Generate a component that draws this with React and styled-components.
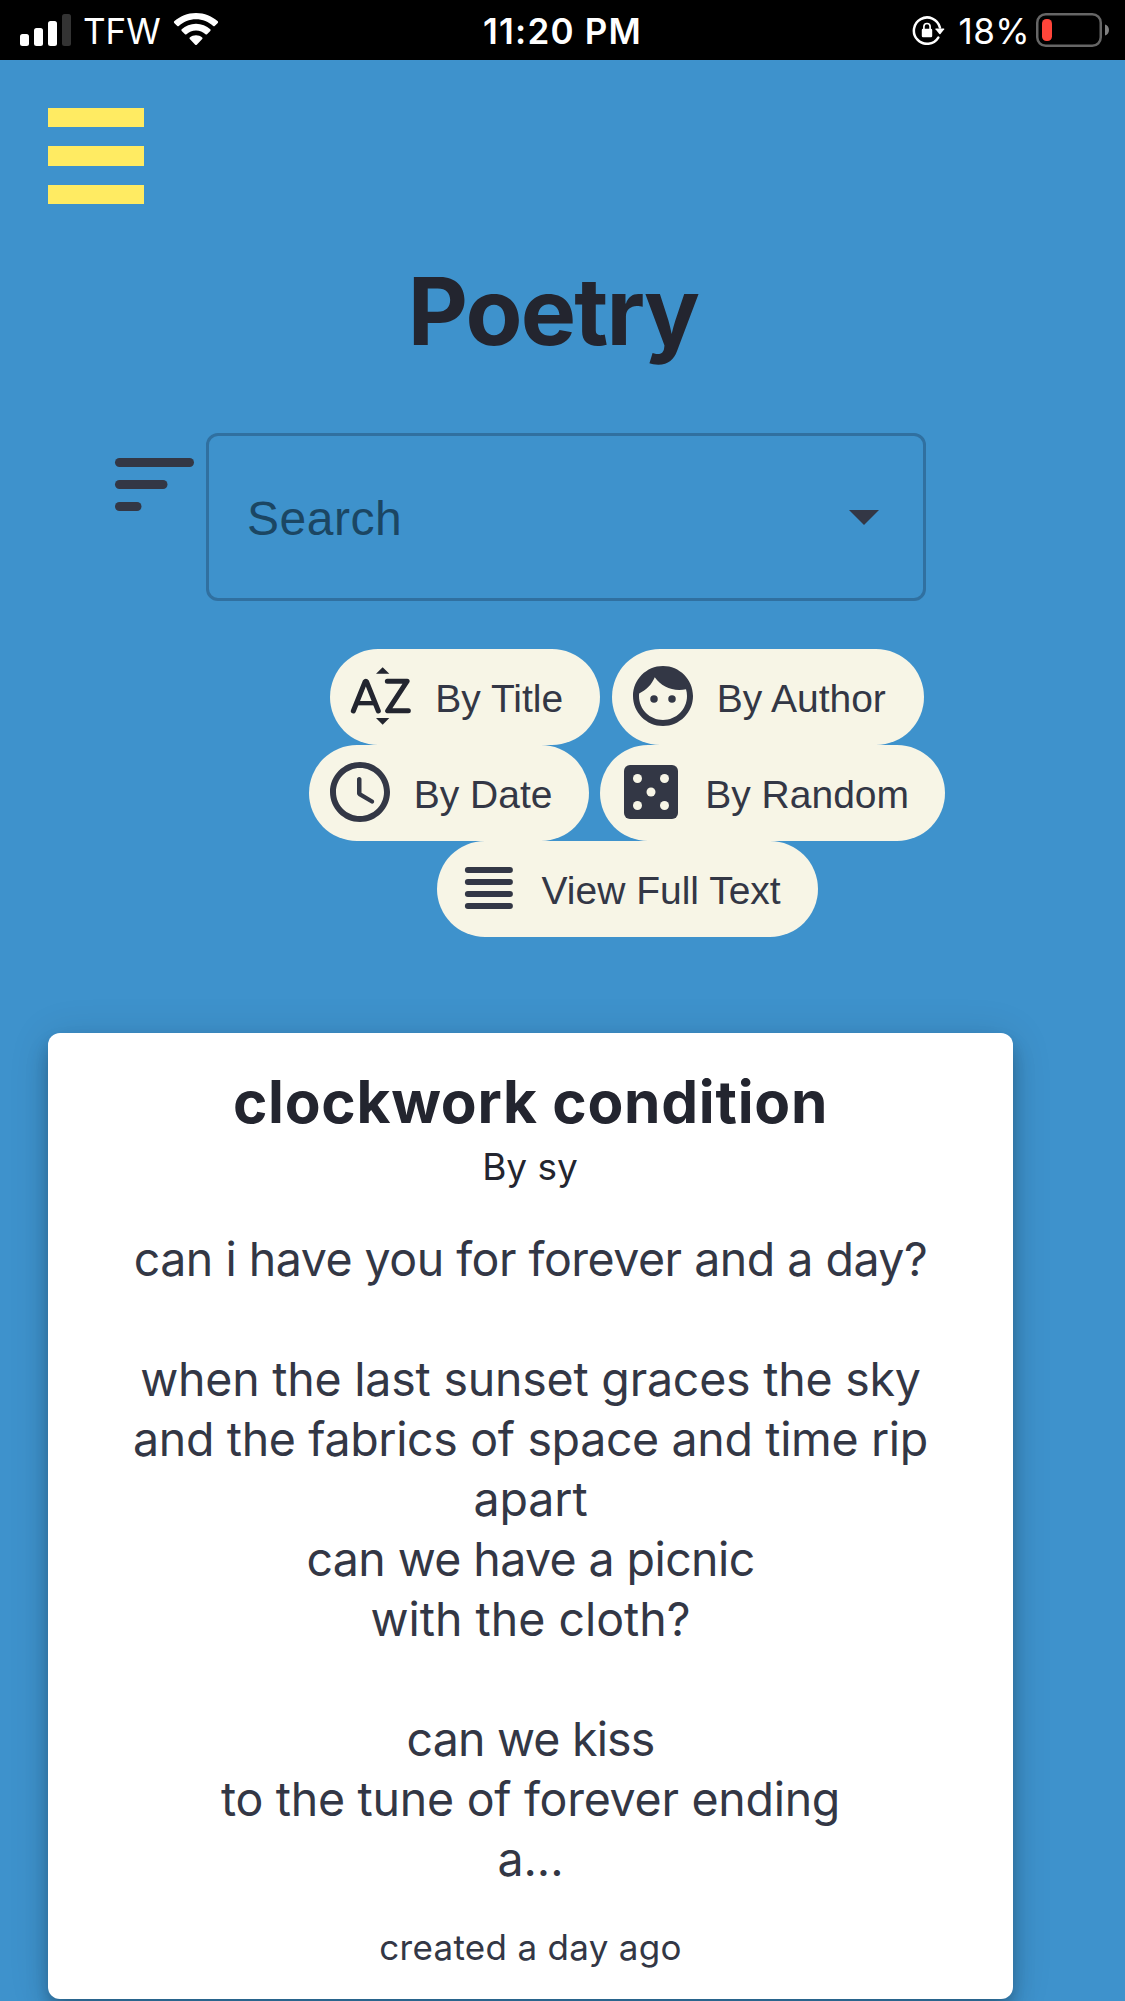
import React from "react";
import styled, { createGlobalStyle } from "styled-components";

const GlobalStyle = createGlobalStyle`
  * { box-sizing: border-box; }
  body { margin: 0; background: #3e92cc; }
`;

const sans = `Inter, "Open Sans", sans-serif`;
const helvetica = `"Liberation Sans", Arial, sans-serif`;

const Page = styled.div`
  height: 2001px;
  overflow: hidden;
  background: #3e92cc;
  color: #333745;
  font-family: ${sans};
`;

const StatusBar = styled.header`
  display: grid;
  grid-template-columns: 1fr auto 1fr;
  align-items: center;
  height: 60px;
  padding: 0 16px;
  background: #000;
  color: #fff;
`;

const StatusGroup = styled.div`
  display: flex;
  align-items: center;
  justify-content: ${(p) => (p.$end ? "flex-end" : "flex-start")};
  padding-left: ${(p) => (p.$end ? 0 : 4)}px;
`;

const StatusText = styled.span`
  padding-top: 2px;
  font-size: 35px;
  line-height: 58px;
  white-space: nowrap;
  font-weight: ${(p) => p.$weight || 400};
  letter-spacing: ${(p) => p.$spacing || 0}px;
  margin: 0 ${(p) => p.$right || 0}px 0 ${(p) => p.$left || 0}px;
`;

const Glyph = styled.svg`
  display: block;
  flex: none;
`;

const MenuButton = styled.button`
  display: flex;
  flex-direction: column;
  justify-content: space-between;
  width: 96px;
  height: 96px;
  margin: 48px 0 0 48px;
  padding: 0;
  border: 0;
  background: none;
`;

const MenuBar = styled.span`
  height: ${(p) => p.$height}px;
  background: #ffeb62;
`;

const Title = styled.h1`
  margin: 47px 19px 0 0;
  font-size: 93px;
  line-height: 120px;
  font-weight: 700;
  letter-spacing: -1.8px;
  text-align: center;
  color: #23252f;
`;

const SearchRow = styled.div`
  display: flex;
  align-items: flex-start;
  margin-top: 62px;
  padding-left: 101px;
`;

const SearchBox = styled.div`
  display: flex;
  align-items: center;
  justify-content: space-between;
  width: 720px;
  height: 168px;
  padding: 0 44px 0 38px;
  border: 3px solid #3070a0;
  border-radius: 12px;
  color: #1b4663;
`;

const Placeholder = styled.span`
  padding-top: 4px;
  font-family: ${helvetica};
  font-size: 48px;
  line-height: 56px;
  letter-spacing: 0.5px;
`;

const Chips = styled.div`
  display: flex;
  flex-direction: column;
  align-items: center;
  width: 636px;
  margin: 48px 0 0 309px;
`;

const ChipRow = styled.div`
  display: flex;
  gap: 11.5px;
`;

const ChipButton = styled.button`
  display: flex;
  align-items: center;
  flex: none;
  width: ${(p) => p.$width}px;
  height: 96px;
  padding: 0 0 0 15px;
  border: 0;
  border-radius: 48px;
  background: #f7f5e6;
  color: #333745;

  svg {
    margin: 0 18px 2px 0;
  }
`;

const ChipLabel = styled.span`
  padding-top: 3px;
  font-family: ${helvetica};
  font-size: 39px;
  line-height: 48px;
  white-space: nowrap;
`;

const Card = styled.article`
  width: 965px;
  height: 966px;
  margin: 96px 0 0 48px;
  padding-top: 33px;
  border-radius: 12px;
  background: #fff;
  text-align: center;
  box-shadow: 0 9px 15px -3px rgba(0, 0, 0, 0.2), 0 15px 24px 0 rgba(0, 0, 0, 0.14),
    0 3px 42px 0 rgba(0, 0, 0, 0.12);
`;

const CardTitle = styled.h2`
  margin: 0;
  font-size: 58.5px;
  line-height: 72px;
  font-weight: 700;
  letter-spacing: 0.75px;
  color: #23252f;
`;

const Byline = styled.p`
  margin: 5px 1px 0 0;
  font-size: 37px;
  line-height: 48px;
  color: #23252f;
`;

const Poem = styled.div`
  margin-top: 38px;
  font-size: 46.5px;
  line-height: 60px;
`;

const PoemLine = styled.p`
  height: 60px;
  margin: 0;
  white-space: nowrap;
  letter-spacing: ${(p) => p.$spacing}px;
`;

const Created = styled.p`
  margin: 34px 0 0;
  font-size: 35px;
  line-height: 48px;
  letter-spacing: 0.3px;
`;

const SignalIcon = () => (
  <Glyph width="51" height="32" viewBox="0 0 51 32" fill="#fff">
    <rect x="0" y="20" width="9" height="12" rx="2.5" />
    <rect x="14" y="14" width="9" height="18" rx="2.5" />
    <rect x="28" y="7" width="9" height="25" rx="2.5" />
    <rect x="42" y="0" width="9" height="32" rx="2.5" fill="#333" />
  </Glyph>
);

const WifiIcon = () => (
  <Glyph width="46" height="34" viewBox="174 13.500 46 34" fill="#fff">
    <path d="M197 13.500C188.500 13.500 180.800 16.800 175.200 21.800Q174.400 22.600 175.200 23.400L178.300 26.500Q179 27.200 179.800 26.500C184.300 22.200 190.400 19.700 197 19.700S209.700 22.200 214.200 26.500Q215 27.200 215.700 26.500L218.800 23.400Q219.600 22.600 218.800 21.800C213.200 16.800 205.500 13.500 197 13.500Z" />
    <path d="M197 24.200C191.500 24.200 186.500 26.300 182.700 29.800Q181.900 30.600 182.700 31.400L186 34.700Q186.700 35.400 187.500 34.700C190 32.400 193.300 31 197 31S204 32.400 206.500 34.700Q207.300 35.400 208 34.700L211.300 31.400Q212.100 30.600 211.300 29.800C207.500 26.300 202.500 24.200 197 24.200Z" />
    <path d="M197 35.700C194.700 35.700 192.500 36.600 190.800 38Q190 38.700 190.800 39.500L196.200 45.200Q197 46 197.800 45.200L203.200 39.500Q204 38.700 203.200 38C201.500 36.600 199.300 35.700 197 35.700Z" />
  </Glyph>
);

const RotationLockIcon = () => (
  <Glyph width="33" height="30" viewBox="911.500 16 33 30" fill="none">
    <path d="M937.800 38.600A13.200 13.200 0 1 1 939.400 28.500" stroke="#fff" strokeWidth="2.500" strokeLinecap="round" />
    <path d="M935.200 29.500H943.400Q944 29.500 943.700 30.200L940 35Q939.400 35.500 938.800 35L935 30.200Q934.700 29.500 935.200 29.500Z" fill="#fff" />
    <rect x="921.300" y="29.700" width="10.400" height="8.600" rx="1.200" fill="#fff" />
    <path d="M923.400 30V27.600A3.100 3.100 0 0 1 929.600 27.600V30" stroke="#fff" strokeWidth="1.700" />
  </Glyph>
);

const BatteryIcon = () => (
  <Glyph width="73" height="34" viewBox="0 0 73 34">
    <rect x="1.250" y="1.250" width="63.500" height="31.500" rx="8.500" fill="none" stroke="#666" strokeWidth="2.500" />
    <rect x="6" y="6" width="10" height="22" rx="4.500" fill="#ff453a" />
    <path d="M69 11.500C71.500 12.300 73 14.500 73 17S71.500 21.700 69 22.500Z" fill="#808080" />
  </Glyph>
);

const SortIcon = () => (
  <Glyph width="105" height="105" viewBox="0 0 105 105" fill="#333745">
    <rect x="14" y="25" width="79" height="9" rx="4.500" />
    <rect x="14" y="47" width="52.500" height="9" rx="4.500" />
    <rect x="14" y="69" width="26.500" height="9" rx="4.500" />
  </Glyph>
);

const CaretIcon = () => (
  <Glyph width="30" height="15" viewBox="0 0 30 15" fill="#333745">
    <path d="M0 0h30L15 15z" />
  </Glyph>
);

const AlphaIcon = () => (
  <Glyph width="72" height="72" viewBox="135 60 216 216">
    <g fill="none" stroke="#23252f" strokeWidth="15" strokeLinecap="round" strokeLinejoin="round">
      <path d="M160 213L195 125.500Q197.500 121.500 200 125.500L235 213" />
      <path d="M172 189.500H224" strokeWidth="13" strokeLinecap="butt" />
      <path d="M262 123.500H321.500L263 212.500H325" />
    </g>
    <path d="M228 101.500L248 81.500L268 101.500ZM228 234H268L248 254Z" fill="#23252f" />
  </Glyph>
);

const FaceIcon = () => (
  <Glyph width="72" height="72" viewBox="0 0 24 24" fill="currentColor">
    <circle cx="9" cy="13" r="1.250" />
    <circle cx="15" cy="13" r="1.250" />
    <path d="M12 2C6.480 2 2 6.480 2 12s4.480 10 10 10 10-4.480 10-10S17.520 2 12 2zm0 18c-4.410 0-8-3.590-8-8 0-.29.02-.58.05-.86 2.360-1.050 4.230-2.980 5.210-5.370C11.070 8.330 14.050 10 17.420 10c.78 0 1.530-.09 2.250-.26.21.71.33 1.470.33 2.260 0 4.410-3.590 8-8 8z" />
  </Glyph>
);

const ClockIcon = () => (
  <Glyph width="72" height="72" viewBox="0 0 24 24" fill="currentColor">
    <path d="M11.990 2C6.470 2 2 6.480 2 12s4.470 10 9.990 10C17.520 22 22 17.520 22 12S17.520 2 11.990 2zM12 20c-4.420 0-8-3.580-8-8s3.580-8 8-8 8 3.580 8 8-3.580 8-8 8z" />
    <path d="M11.780 7h-.06c-.4 0-.72.32-.72.72v4.720c0 .35.18.68.49.86l4.150 2.490c.34.2.78.1.98-.24.21-.34.1-.79-.25-.99l-3.870-2.300V7.720c0-.4-.32-.72-.72-.72z" />
  </Glyph>
);

const DiceIcon = () => (
  <Glyph width="72" height="72" viewBox="0 0 24 24">
    <rect x="3" y="3" width="18" height="18" rx="2" fill="currentColor" />
    <g fill="#f7f5e6">
      <circle cx="7.500" cy="7.500" r="1.500" />
      <circle cx="16.500" cy="7.500" r="1.500" />
      <circle cx="12" cy="12" r="1.500" />
      <circle cx="7.500" cy="16.500" r="1.500" />
      <circle cx="16.500" cy="16.500" r="1.500" />
    </g>
  </Glyph>
);

const LinesIcon = () => (
  <Glyph width="72" height="72" viewBox="0 0 24 24" fill="currentColor">
    {[5, 9, 13, 17].map((y) => (
      <rect key={y} x="4.300" y={y} width="16" height="2" rx="1" />
    ))}
  </Glyph>
);

const chipRows = [
  [
    { label: "By Title", icon: AlphaIcon, width: 270 },
    { label: "By Author", icon: FaceIcon, width: 312 },
  ],
  [
    { label: "By Date", icon: ClockIcon, width: 280 },
    { label: "By Random", icon: DiceIcon, width: 345 },
  ],
  [{ label: "View Full Text", icon: LinesIcon, width: 381 }],
];

const poem = [
  ["can i have you for forever and a day?", -0.5],
  ["", 0],
  ["when the last sunset graces the sky", -0.22],
  ["and the fabrics of space and time rip", -0.35],
  ["apart", -0.1],
  ["can we have a picnic", -0.6],
  ["with the cloth?", 0],
  ["", 0],
  ["can we kiss", -0.8],
  ["to the tune of forever ending", -0.27],
  ["a...", -0.1],
];

export default function App() {
  return (
    <Page>
      <GlobalStyle />
      <StatusBar>
        <StatusGroup>
          <SignalIcon />
          <StatusText $left={12} $right={12.5}>TFW</StatusText>
          <WifiIcon />
        </StatusGroup>
        <StatusText $weight={600} $spacing={1.2}>11:20 PM</StatusText>
        <StatusGroup $end>
          <RotationLockIcon />
          <StatusText $left={14} $right={6} $spacing={0.4}>18%</StatusText>
          <BatteryIcon />
        </StatusGroup>
      </StatusBar>
      <MenuButton aria-label="Menu">
        <MenuBar $height={19} />
        <MenuBar $height={20} />
        <MenuBar $height={19} />
      </MenuButton>
      <Title>Poetry</Title>
      <SearchRow>
        <SortIcon />
        <SearchBox>
          <Placeholder>Search</Placeholder>
          <CaretIcon />
        </SearchBox>
      </SearchRow>
      <Chips>
        {chipRows.map((row, i) => (
          <ChipRow key={i}>
            {row.map(({ label, icon: Icon, width }) => (
              <ChipButton key={label} $width={width}>
                <Icon />
                <ChipLabel>{label}</ChipLabel>
              </ChipButton>
            ))}
          </ChipRow>
        ))}
      </Chips>
      <Card>
        <CardTitle>clockwork condition</CardTitle>
        <Byline>By sy</Byline>
        <Poem>
          {poem.map(([line, spacing], i) => (
            <PoemLine key={i} $spacing={spacing}>
              {line}
            </PoemLine>
          ))}
        </Poem>
        <Created>created a day ago</Created>
      </Card>
    </Page>
  );
}
